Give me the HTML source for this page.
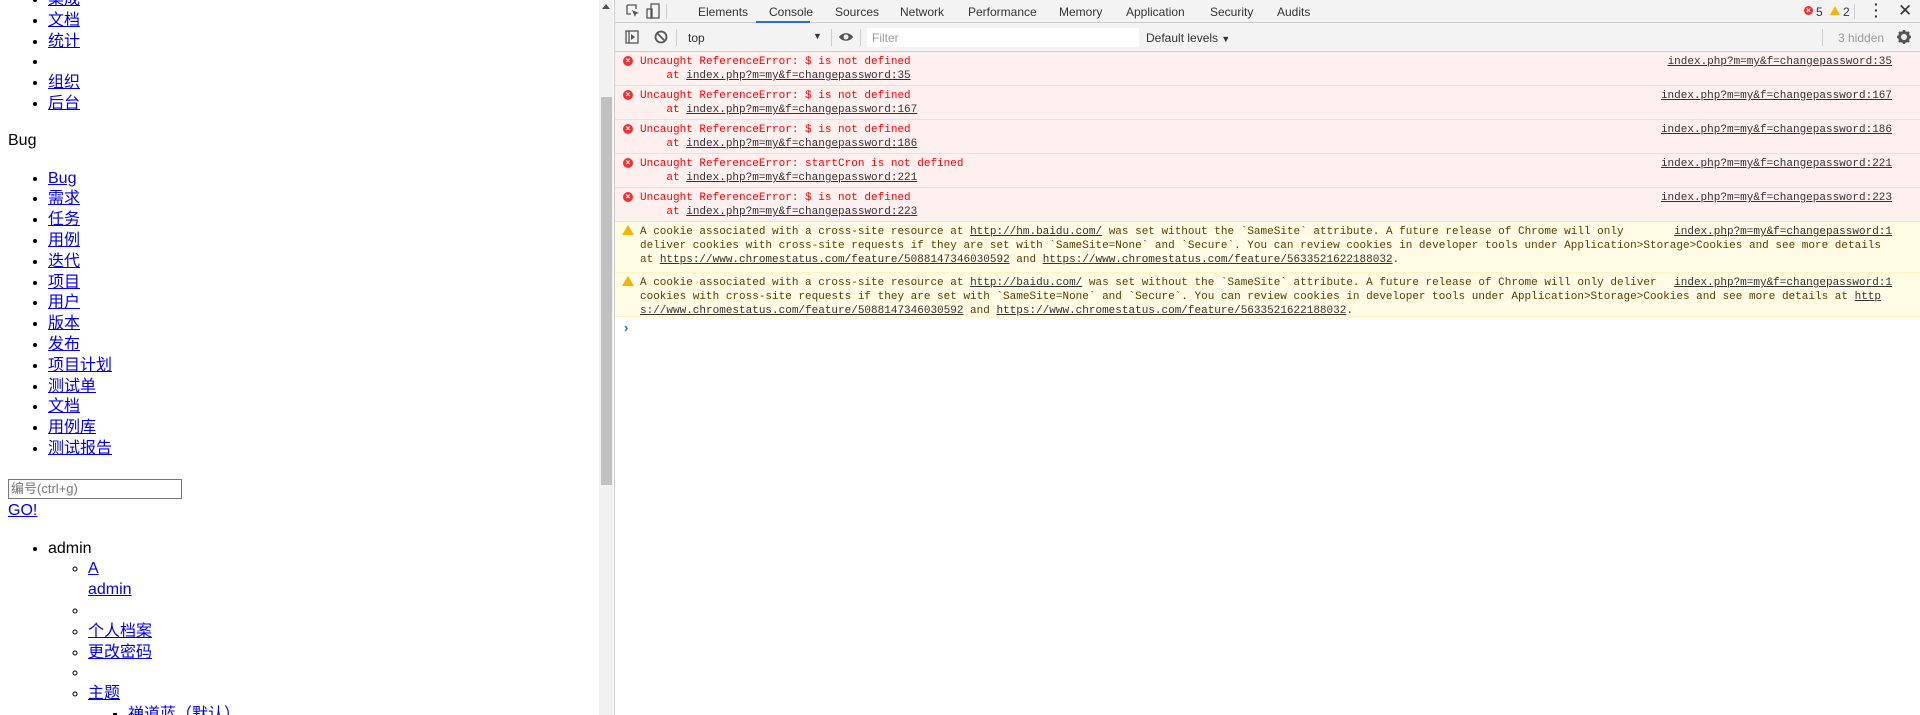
<!DOCTYPE html>
<html><head><meta charset="utf-8"><style>
*{box-sizing:border-box}
body{margin:0;width:1920px;height:715px;overflow:hidden;background:#fff;font-family:"Liberation Sans","Noto Sans CJK SC",sans-serif;position:relative}
#page{position:absolute;left:0;top:0;width:600px;height:715px;overflow:hidden;font-size:16px;line-height:20.8px}
#page ul{margin:16px 0 16px 8px;padding-left:40px}
#page ul ul{margin:0;}
#page a{color:#00e;text-decoration:underline}
.l1{list-style:disc}.l2{list-style:circle}.l3{list-style:square}
#sb{position:absolute;left:599px;top:0;width:14px;height:715px;background:#f1f1f1}
#sb .th{position:absolute;left:2px;top:97px;width:11px;height:388px;background:#c1c1c1}
#sb .ar{position:absolute;left:3px;top:4px;width:0;height:0;border-left:4px solid transparent;border-right:4px solid transparent;border-bottom:5px solid #505050}
#dt{position:absolute;left:614px;top:0;width:1306px;height:715px;background:#fff;border-left:1px solid #ccc;font-size:12px;color:#333}
.bar{position:absolute;left:0;width:100%;background:#f3f3f3;border-bottom:1px solid #ccc}
.t{position:absolute;top:5px;color:#333}
.c{font-family:"Liberation Mono",monospace;font-size:11px;line-height:14px;white-space:pre}
.row{position:absolute;left:0;width:100%;padding-left:25px}
.err{background:#fff0f0;border-bottom:1px solid #ffd6d6;color:#f00;height:34px;padding-top:3px}
.warn{background:#fffbe5;border-bottom:1px solid #fff5c2;color:#5c3c00;padding-top:3px}
.src{position:absolute;right:28px;top:3px;color:#333;text-decoration:underline}
.u{text-decoration:underline;color:#333}
.ei{position:absolute;left:8px;top:4px;width:10px;height:10px;border-radius:50%;background:#e33;color:#fff;font:bold 8px/10px "Liberation Sans";text-align:center}
.wi{position:absolute;left:7px;top:3px;width:0;height:0;border-left:6px solid transparent;border-right:6px solid transparent;border-bottom:10px solid #f2b600}
.sep{position:absolute;width:1px;background:#ccc}
</style></head><body>
<div id="page">
<ul class="l1" style="margin-top:-10px">
<li><a>集成</a></li><li><a>文档</a></li><li><a>统计</a></li><li></li><li><a>组织</a></li><li><a>后台</a></li>
</ul>
<div style="margin:16px 0 0 8px">Bug</div>
<ul class="l1" style="margin-top:17px">
<li><a>Bug</a></li><li><a>需求</a></li><li><a>任务</a></li><li><a>用例</a></li><li><a>迭代</a></li><li><a>项目</a></li><li><a>用户</a></li><li><a>版本</a></li><li><a>发布</a></li><li><a>项目计划</a></li><li><a>测试单</a></li><li><a>文档</a></li><li><a>用例库</a></li><li><a>测试报告</a></li>
</ul>
<div style="margin:19px 0 0 8px;width:174px;height:20px;border:1px solid #767676;font-size:13px;line-height:18px;color:#757575;padding-left:2px">编号(ctrl+g)</div>
<div style="margin:2px 0 0 8px"><a>GO!</a></div>
<ul class="l1" style="margin-top:17px">
<li>admin<ul class="l2"><li><a>A</a><br><a>admin</a></li><li></li><li><a>个人档案</a></li><li><a>更改密码</a></li><li></li><li><a>主题</a><ul class="l3"><li><a>禅道蓝（默认）</a></li></ul></li></ul></li>
</ul>
</div>
<div id="sb"><div class="ar"></div><div class="th"></div></div>
<div id="dt">
<div class="bar" style="top:0;height:23px">
<svg style="position:absolute;left:11px;top:4px" width="14" height="14" viewBox="0 0 14 14"><path d="M1 1h9v4M1 1v9h4" fill="none" stroke="#555" stroke-width="1.3"/><path d="M6 6l7 3-3 1 -1 3z" fill="#555"/></svg>
<svg style="position:absolute;left:31px;top:3px" width="14" height="16" viewBox="0 0 14 16"><rect x="5" y="1" width="8" height="14" fill="none" stroke="#555" stroke-width="1.3"/><rect x="1" y="6" width="5" height="9" fill="none" stroke="#555" stroke-width="1.3"/></svg>
<div class="sep" style="left:51px;top:4px;height:15px"></div>
<span class="t" style="left:83px">Elements</span>
<span class="t" style="left:154px">Console</span>
<div style="position:absolute;left:141px;top:21px;width:54px;height:2px;background:#1a73e8"></div>
<span class="t" style="left:220px">Sources</span>
<span class="t" style="left:285px">Network</span>
<span class="t" style="left:353px">Performance</span>
<span class="t" style="left:444px">Memory</span>
<span class="t" style="left:511px">Application</span>
<span class="t" style="left:595px">Security</span>
<span class="t" style="left:662px">Audits</span>
<div class="ei" style="left:1189px;top:6px;width:9px;height:9px;line-height:9px">×</div><span class="t" style="left:1201px">5</span>
<div class="wi" style="left:1215px;top:6px;border-left-width:5px;border-right-width:5px;border-bottom-width:9px"></div><span class="t" style="left:1228px">2</span>
<div class="sep" style="left:1239px;top:4px;height:15px"></div>
<span class="t" style="left:1259px;top:1px;font-weight:bold;font-size:14px;line-height:6px;width:4px">·<br>·<br>·</span>
<span class="t" style="left:1283px;top:1px;font-size:17px">✕</span>
</div>
<div class="bar" style="top:23px;height:29px">
<svg style="position:absolute;left:10px;top:7px" width="14" height="14" viewBox="0 0 14 14"><rect x="1" y="1" width="12" height="12" fill="none" stroke="#555" stroke-width="1.3"/><path d="M4 1v12" stroke="#555" stroke-width="1.3"/><path d="M6 4l4 3-4 3z" fill="#555"/></svg>
<svg style="position:absolute;left:39px;top:7px" width="14" height="14" viewBox="0 0 14 14"><circle cx="7" cy="7" r="5.5" fill="none" stroke="#555" stroke-width="1.8"/><path d="M3 3l8 8" stroke="#555" stroke-width="1.8"/></svg>
<div class="sep" style="left:61px;top:6px;height:17px"></div>
<span class="t" style="left:73px;top:8px">top</span>
<span class="t" style="left:198px;top:8px;font-size:9px">▼</span>
<div class="sep" style="left:216px;top:6px;height:17px"></div>
<svg style="position:absolute;left:223px;top:8px" width="16" height="12" viewBox="0 0 16 12"><path d="M1 6C4 1 12 1 15 6C12 11 4 11 1 6z" fill="#555"/><circle cx="8" cy="6" r="2.5" fill="#f3f3f3"/></svg>
<div class="sep" style="left:245px;top:6px;height:17px"></div>
<div style="position:absolute;left:252px;top:5px;width:272px;height:19px;background:#fff;color:#999;padding:3px 5px">Filter</div>
<span class="t" style="left:531px;top:8px">Default levels <span style="font-size:9px">▼</span></span>
<div class="sep" style="left:1207px;top:6px;height:17px"></div>
<span class="t" style="left:1223px;top:8px;color:#999">3 hidden</span>
<svg style="position:absolute;left:1282px;top:7px" width="14" height="14" viewBox="0 0 14 14"><circle cx="7" cy="7" r="4.5" fill="none" stroke="#555" stroke-width="3"/><path d="M7 0v3M7 11v3M0 7h3M11 7h3M2 2l2 2M10 10l2 2M12 2l-2 2M2 12l2-2" stroke="#555" stroke-width="2.4"/></svg>
</div>
<div class="row err c" style="top:52px"><div class="ei">×</div>Uncaught ReferenceError: $ is not defined
    at <span class="u">index.php?m=my&amp;f=changepassword:35</span><span class="src">index.php?m=my&amp;f=changepassword:35</span></div>
<div class="row err c" style="top:86px"><div class="ei">×</div>Uncaught ReferenceError: $ is not defined
    at <span class="u">index.php?m=my&amp;f=changepassword:167</span><span class="src">index.php?m=my&amp;f=changepassword:167</span></div>
<div class="row err c" style="top:120px"><div class="ei">×</div>Uncaught ReferenceError: $ is not defined
    at <span class="u">index.php?m=my&amp;f=changepassword:186</span><span class="src">index.php?m=my&amp;f=changepassword:186</span></div>
<div class="row err c" style="top:154px"><div class="ei">×</div>Uncaught ReferenceError: startCron is not defined
    at <span class="u">index.php?m=my&amp;f=changepassword:221</span><span class="src">index.php?m=my&amp;f=changepassword:221</span></div>
<div class="row err c" style="top:188px"><div class="ei">×</div>Uncaught ReferenceError: $ is not defined
    at <span class="u">index.php?m=my&amp;f=changepassword:223</span><span class="src">index.php?m=my&amp;f=changepassword:223</span></div>
<div class="row warn c" style="top:222px;height:51px"><div class="wi"></div>A cookie associated with a cross-site resource at <span class="u">http://hm.baidu.com/</span> was set without the `SameSite` attribute. A future release of Chrome will only
deliver cookies with cross-site requests if they are set with `SameSite=None` and `Secure`. You can review cookies in developer tools under Application&gt;Storage&gt;Cookies and see more details
at <span class="u">https://www.chromestatus.com/feature/5088147346030592</span> and <span class="u">https://www.chromestatus.com/feature/5633521622188032</span>.<span class="src">index.php?m=my&amp;f=changepassword:1</span></div>
<div class="row warn c" style="top:273px;height:44px"><div class="wi"></div>A cookie associated with a cross-site resource at <span class="u">http://baidu.com/</span> was set without the `SameSite` attribute. A future release of Chrome will only deliver
cookies with cross-site requests if they are set with `SameSite=None` and `Secure`. You can review cookies in developer tools under Application&gt;Storage&gt;Cookies and see more details at <span class="u">http</span>
<span class="u">s://www.chromestatus.com/feature/5088147346030592</span> and <span class="u">https://www.chromestatus.com/feature/5633521622188032</span>.<span class="src">index.php?m=my&amp;f=changepassword:1</span></div>
<div style="position:absolute;left:9px;top:320px;color:#1a73e8;font-size:13px;font-weight:bold">›</div>
</div>
</body></html>
